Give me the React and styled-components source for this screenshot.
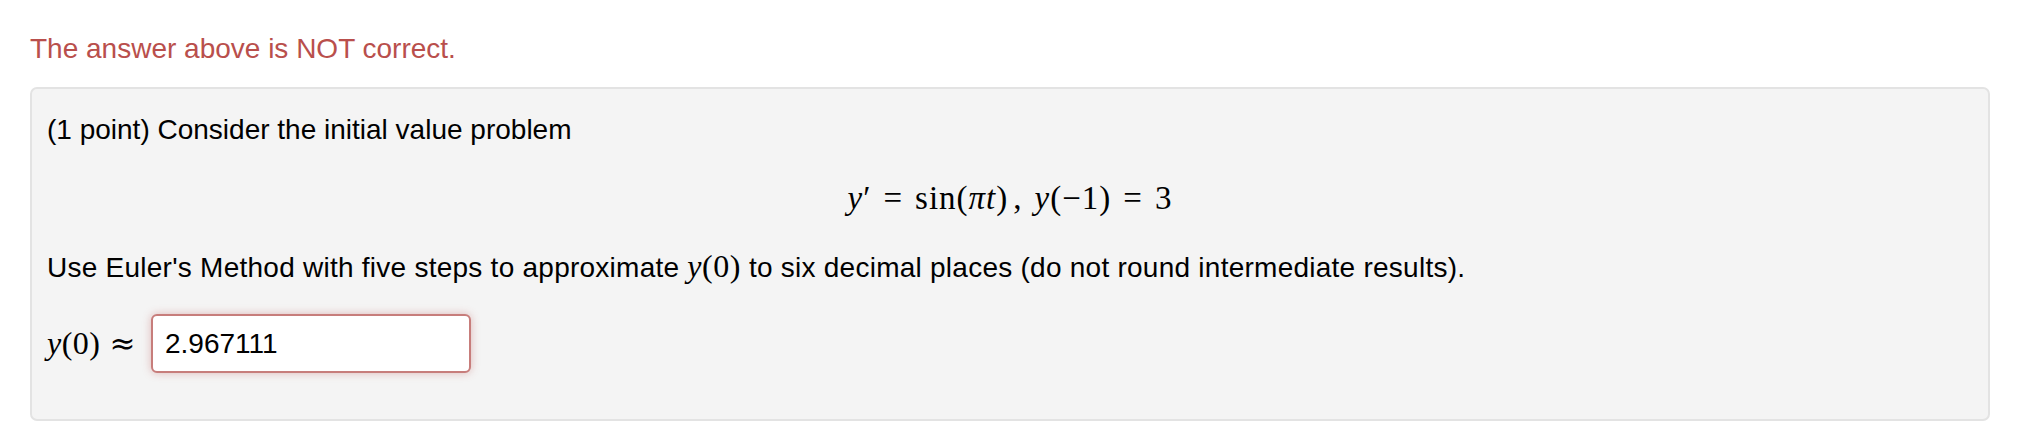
import React from "react";
import styled, { createGlobalStyle } from "styled-components";

const GlobalStyle = createGlobalStyle`
  html, body {
    margin: 0;
    padding: 0;
    background: #ffffff;
  }
  body {
    font-family: "Liberation Sans", Arial, Helvetica, sans-serif;
    color: #000;
  }
`;

const Page = styled.div`
  width: 2024px;
  padding: 29px 34px 0 30px;
  box-sizing: border-box;
`;

const Message = styled.div`
  color: #b94f4c;
  font-size: 28px;
  line-height: 40px;
  height: 40px;
  margin-bottom: 18px;
`;

const ProblemBox = styled.div`
  background: #f4f4f4;
  border: 2px solid #e3e3e3;
  border-radius: 7px;
  padding: 21px 15px 45px 15px;
  display: flex;
  flex-direction: column;
  gap: 28px;
  height: 334px;
  box-sizing: border-box;
`;

const Line = styled.div`
  font-size: 28px;
  line-height: 40px;
  height: 40px;
  white-space: nowrap;
  letter-spacing: ${(p) => p.tracking || 0}px;
  text-align: ${(p) => (p.center ? "center" : "left")};
`;

const Math = styled.span`
  font-family: "Liberation Serif", "Times New Roman", serif;
  font-size: ${(p) => p.size || 32}px;
  letter-spacing: ${(p) => p.tracking || 0.5}px;
`;

const Var = styled.i`
  font-style: italic;
  font-family: "Liberation Serif", "Times New Roman", serif;
`;

const Op = styled.span`
  margin: 0 ${(p) => p.right ?? p.space ?? 12}px 0 ${(p) => p.space ?? 12}px;
`;

const Approx = styled.span`
  font-family: "DejaVu Serif", "Liberation Serif", serif;
  font-size: 31px;
  margin-left: 9px;
`;

const AnswerRow = styled.div`
  display: flex;
  align-items: center;
  height: 59px;
`;

const Label = styled(Math)`
  margin-right: 15px;
`;

const AnswerInput = styled.input`
  width: 320px;
  height: 59px;
  box-sizing: border-box;
  border: 2px solid #c77d7b;
  border-radius: 6px;
  background: #fff;
  padding: 0 12px;
  font-family: "Liberation Sans", Arial, Helvetica, sans-serif;
  font-size: 28px;
  color: #000;
  box-shadow: 0 0 9px rgba(185, 74, 72, 0.35);
  outline: none;
`;

export default function App() {
  return (
    <>
      <GlobalStyle />
      <Page>
        <Message>The answer above is NOT correct.</Message>
        <ProblemBox>
          <Line>(1 point) Consider the initial value problem</Line>
          <Line center>
            <Math size={33} tracking={1}>
              <Var>y</Var>′<Op>=</Op>sin(<Var>πt</Var>)<Op space={5} right={12}>,</Op>
              <Var>y</Var>(−1)<Op>=</Op>3
            </Math>
          </Line>
          <Line tracking={0.25}>
            Use Euler's Method with five steps to approximate{" "}
            <Math>
              <Var>y</Var>(0)
            </Math>{" "}
            to six decimal places (do not round intermediate results).
          </Line>
          <AnswerRow>
            <Label>
              <Var>y</Var>(0)
              <Approx>≈</Approx>
            </Label>
            <AnswerInput readOnly value="2.967111" />
          </AnswerRow>
        </ProblemBox>
      </Page>
    </>
  );
}
